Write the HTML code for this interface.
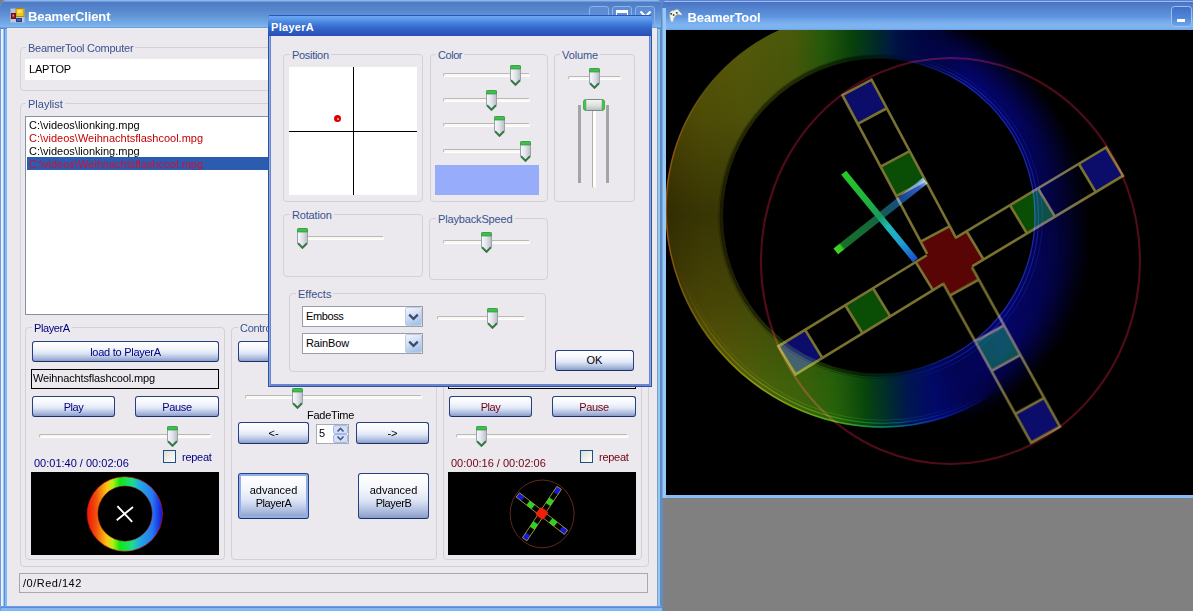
<!DOCTYPE html>
<html>
<head>
<meta charset="utf-8">
<title>BeamerClient</title>
<style>
*{box-sizing:border-box;margin:0;padding:0}
html,body{width:1193px;height:611px;overflow:hidden;background:#808080}
body{position:relative;font-family:"Liberation Sans",sans-serif;font-size:11px;color:#000}
.abs,.abs *{position:absolute}
.abs{left:0;top:0}
.t{white-space:nowrap;line-height:13px;height:13px}
/* group box */
.gb{border:1px solid #d3d0d8;border-radius:4px}
.gl{background:#ebe9ed;color:#38528f;padding:0 2px;white-space:nowrap;line-height:13px;height:13px}
/* buttons */
.btn{border:1px solid #263f80;border-bottom-color:#1c3068;border-radius:3px;background:linear-gradient(#ffffff 0%,#f5f7fc 32%,#dfe6f5 58%,#b6c4e3 80%,#8a9cc8 100%);text-align:center;white-space:nowrap}
.btn span{position:static}
.navy{color:#000080}
.maroon{color:#720010}
/* slider */
.trk{height:4px;border-radius:2px;background:#f8f8f4;border:1px solid #b9b9b2;border-bottom-color:#fff;border-right-color:#fff}
.thumb{width:11px;height:21px}
.cb{width:20px;height:21px;border:1px solid #8cb2ea;border-radius:3px;background:linear-gradient(#5c8ad2,#5f90d8 50%,#6c9fe0)}
.chk{width:13px;height:13px;border:1px solid #1c5180;background:linear-gradient(135deg,#dcdcd7,#fff)}
.foc{box-shadow:inset 0 0 0 2px #8eb0ec}
</style>
</head>
<body>
<div style="position:absolute;left:650px;top:0;width:24px;height:12px;background:#5a84cc"></div>
<!-- ================= Main window: BeamerClient ================= -->
<div class="abs" id="main" style="width:663px;height:611px;">
  <div id="mframe" style="left:0;top:0;width:663px;height:611px;border-radius:7px 7px 0 0;background:#84b8f0"></div>
  <!-- left border -->
  <div style="left:0;top:20px;width:7px;height:591px;background:linear-gradient(to right,#7896d8 0,#7896d8 1.2px,#e6f1ff 1.4px,#e6f1ff 2.9px,#98c8f4 3.1px,#98c8f4 3.9px,#5a8cdc 4.1px,#5a8cdc 4.9px,#84b8f0 5.1px,#84b8f0 6.6px,#cfe3fa 6.8px)"></div>
  <!-- right border -->
  <div style="left:657px;top:20px;width:6px;height:591px;background:linear-gradient(to right,#7da0cd 0,#7da0cd 0.9px,#96c8eb 1.1px,#96c8eb 2.9px,#5f8cc3 3.1px,#5f8cc3 6px)"></div>
  <!-- bottom border -->
  <div style="left:1px;top:606px;width:661px;height:5px;background:linear-gradient(#cfe3fa 0,#5a8cdc 0.6px,#5a8cdc 1.8px,#84b8f0 2.2px)"></div>
  <div id="mtitle" style="left:0;top:0;width:663px;height:29px;border-radius:7px 7px 0 0;background:linear-gradient(#8fb6ee 0px,#8fb6ee 1px,#4f7cc4 2px,#5686cd 10px,#6497d8 17px,#78b0ea 25px,#7db6ee 26.5px,#6a9cdc 27.6px,#5a8ac8 28.3px,#5a8ac8 29px)"></div>
  <div id="mclient" style="left:7px;top:28.3px;width:650px;height:578px;background:#ebe9ed"></div>
  <!-- icon -->
  <svg style="left:10px;top:7px" width="16" height="16" viewBox="0 0 16 16"><rect x="0.5" y="1.5" width="14" height="14" fill="#c9cfdc" opacity="0.85"/><rect x="6" y="1.5" width="8" height="8" fill="#f2c81c" stroke="#b08a10" stroke-width="1"/><rect x="7.5" y="3" width="4" height="3" fill="#fbe57a"/><rect x="1.5" y="6.5" width="4" height="5" fill="#a01818" stroke="#701010" stroke-width="1"/><rect x="2.5" y="7.5" width="1.5" height="2" fill="#e08080"/><rect x="6.5" y="11.5" width="5" height="3" fill="#3a62b0" stroke="#24407c" stroke-width="1"/></svg>
  <!-- caption buttons -->
  <div class="cb" style="left:589px;top:6px"></div>
  <div class="cb" style="left:612px;top:6px"><div style="left:3px;top:3px;width:12px;height:10px;border:1px solid #fff;border-top-width:3px"></div></div>
  <div class="cb" style="left:635px;top:6px"><svg style="left:3px;top:3px" width="13" height="13" viewBox="0 0 13 13"><path d="M1.5,1.5 L11.5,11.5 M11.5,1.5 L1.5,11.5" stroke="#fff" stroke-width="2.2" fill="none"/></svg></div>
  <!-- group: BeamerTool Computer -->
  <div class="gb" style="left:20px;top:47px;width:629px;height:44px"></div>
  <div class="t gl" style="left:26px;top:41.5px;letter-spacing:-0.25px">BeamerTool Computer</div>
  <div style="left:25px;top:59px;width:380px;height:21px;background:#fff"></div>
  <div class="t" style="left:29px;top:63px;letter-spacing:-0.2px">LAPTOP</div>
  <!-- group: Playlist -->
  <div class="gb" style="left:20px;top:103px;width:629px;height:464px"></div>
  <div class="t gl" style="left:26px;top:97.5px">Playlist</div>
  <div style="left:25px;top:116px;width:618px;height:199px;background:#fff;border:1px solid #8791a3"></div>
  <div class="t" style="left:29px;top:119px">C:\videos\lionking.mpg</div>
  <div class="t" style="left:29px;top:132px;color:#c80000">C:\videos\Weihnachtsflashcool.mpg</div>
  <div class="t" style="left:29px;top:145px">C:\videos\lionking.mpg</div>
  <div style="left:27px;top:157px;width:614px;height:13px;background:#2c5cb0"></div>
  <div class="t" style="left:29px;top:158px;color:#d01030">C:\videos\Weihnachtsflashcool.mpg</div>
  <!-- group: PlayerA -->
  <div class="gb" style="left:25px;top:327px;width:200px;height:233px"></div>
  <div class="t gl navy" style="left:32px;top:321.5px;letter-spacing:-0.4px">PlayerA</div>
  <div class="btn navy" style="left:32px;top:341px;width:187px;height:21px;line-height:20.5px;letter-spacing:-0.26px">load to PlayerA</div>
  <div style="left:31px;top:369px;width:188px;height:20px;border:1px solid #000;background:#ebe9ed"></div>
  <div class="t" style="left:33px;top:372px;letter-spacing:-0.14px">Weihnachtsflashcool.mpg</div>
  <div class="btn navy" style="left:32px;top:396px;width:83px;height:21px;line-height:20.5px;letter-spacing:-0.45px">Play</div>
  <div class="btn navy" style="left:135px;top:396px;width:84px;height:21px;line-height:20.5px;letter-spacing:-0.3px">Pause</div>
  <div class="trk" style="left:39px;top:434px;width:172px"></div>
  <svg class="thumb" style="left:167px;top:426px" width="11" height="21" viewBox="0 0 11 21"><defs><linearGradient id="tg1" x1="0" x2="1"><stop offset="0" stop-color="#fafafc"/><stop offset="0.5" stop-color="#e2e2ea"/><stop offset="1" stop-color="#bcbcc6"/></linearGradient></defs><path d="M1.5,0.5 h8 a1,1 0 0 1 1,1 v13.5 l-5,5 l-5,-5 v-13.5 a1,1 0 0 1 1,-1z" fill="url(#tg1)" stroke="#98a2aa" stroke-width="1"/><path d="M1.5,0.5 h8 a1,1 0 0 1 1,1 v2.4 h-10 v-2.4 a1,1 0 0 1 1,-1z" fill="#44bc52" stroke="#34a444" stroke-width="1"/><path d="M1,15.3 l4.5,4.5 l4.5,-4.5" fill="none" stroke="#347a44" stroke-width="2"/></svg>
  <div class="chk" style="left:163px;top:450px"></div>
  <div class="t navy" style="left:182px;top:450.5px;letter-spacing:-0.27px">repeat</div>
  <div class="t navy" style="left:34px;top:456.5px">00:01:40 / 00:02:06</div>
  <div id="prevA" style="left:31px;top:472px;width:188px;height:83px;background:#000;overflow:hidden"><svg style="left:0;top:0" width="188" height="83" viewBox="31 472 188 83"><defs><linearGradient id="pa" gradientUnits="userSpaceOnUse" x1="87" y1="0" x2="162.5" y2="0"><stop offset="0" stop-color="#f0140a"/><stop offset="0.12" stop-color="#f0500a"/><stop offset="0.265" stop-color="#fac814"/><stop offset="0.34" stop-color="#b4f014"/><stop offset="0.435" stop-color="#14e614"/><stop offset="0.6" stop-color="#1edc8c"/><stop offset="0.7" stop-color="#1eaae6"/><stop offset="0.865" stop-color="#2878f0"/><stop offset="1" stop-color="#1414dc"/></linearGradient></defs>
<path fill="url(#pa)" fill-rule="evenodd" d="M87.1,514 a37.7,37.3 0 1 0 75.4,0 a37.7,37.3 0 1 0 -75.4,0z M97.8,513.6 a27.2,27.6 0 1 0 54.4,0 a27.2,27.6 0 1 0 -54.4,0z"/>
<ellipse cx="124.8" cy="514" rx="37.7" ry="37.3" fill="none" stroke="#c81408" stroke-width="0.8" opacity="0.8"/>
<ellipse cx="125" cy="513.6" rx="27.2" ry="27.6" fill="none" stroke="#a01008" stroke-width="0.7" opacity="0.7"/>
<path d="M117.4,506.2 L132.2,521.8 M133,507 L116.7,520.2" stroke="#fff" stroke-width="1.9" fill="none"/></svg></div>
  <!-- group: Control -->
  <div class="gb" style="left:231px;top:327px;width:206px;height:233px"></div>
  <div class="t gl" style="left:238px;top:321.5px;letter-spacing:-0.3px">Control</div>
  <div class="btn" style="left:238px;top:341px;width:192px;height:21px;line-height:20.5px"></div>
  <div class="trk" style="left:245px;top:395px;width:177px"></div>
  <svg class="thumb" style="left:292px;top:388px" width="11" height="21" viewBox="0 0 11 21"><defs><linearGradient id="tg2" x1="0" x2="1"><stop offset="0" stop-color="#fafafc"/><stop offset="0.5" stop-color="#e2e2ea"/><stop offset="1" stop-color="#bcbcc6"/></linearGradient></defs><path d="M1.5,0.5 h8 a1,1 0 0 1 1,1 v13.5 l-5,5 l-5,-5 v-13.5 a1,1 0 0 1 1,-1z" fill="url(#tg2)" stroke="#98a2aa" stroke-width="1"/><path d="M1.5,0.5 h8 a1,1 0 0 1 1,1 v2.4 h-10 v-2.4 a1,1 0 0 1 1,-1z" fill="#44bc52" stroke="#34a444" stroke-width="1"/><path d="M1,15.3 l4.5,4.5 l4.5,-4.5" fill="none" stroke="#347a44" stroke-width="2"/></svg>
  <div class="t" style="left:307px;top:408.5px;letter-spacing:-0.25px">FadeTime</div>
  <div class="btn" style="left:238px;top:422px;width:71px;height:22px;line-height:20px">&lt;-</div>
  <div id="nud" style="left:316px;top:424px;width:33px;height:20px;background:#fff;border:1px solid #a5acb2"></div>
  <svg style="left:333px;top:425px" width="15" height="18" viewBox="0 0 15 18"><rect x="0.5" y="0.5" width="14" height="8" rx="1.5" fill="#d4defa" stroke="#a8b8e4"/><rect x="0.5" y="9.5" width="14" height="8" rx="1.5" fill="#d4defa" stroke="#a8b8e4"/><path d="M4.5,6.5 l3,-3 l3,3" fill="none" stroke="#44587c" stroke-width="1.6"/><path d="M4.5,11.5 l3,3 l3,-3" fill="none" stroke="#44587c" stroke-width="1.6"/></svg>
  <div class="t" style="left:319px;top:427px">5</div>
  <div class="btn" style="left:356px;top:422px;width:73px;height:22px;line-height:20px">-&gt;</div>
  <div class="btn foc" style="left:238px;top:473px;width:71px;height:46px;line-height:13px;padding-top:10px">advanced<br><span style="letter-spacing:-0.4px">PlayerA</span></div>
  <div class="btn" style="left:358px;top:473px;width:71px;height:46px;line-height:13px;padding-top:10px">advanced<br><span style="letter-spacing:-0.4px">PlayerB</span></div>
  <!-- group: PlayerB -->
  <div class="gb" style="left:443px;top:327px;width:199px;height:233px"></div>
    <div class="btn maroon" style="left:449px;top:341px;width:187px;height:21px;line-height:20.5px;letter-spacing:-0.26px"></div>
  <div style="left:448px;top:369px;width:188px;height:20px;border:1px solid #000;background:#ebe9ed"></div>
    <div class="btn maroon" style="left:449px;top:396px;width:83px;height:21px;line-height:20.5px;letter-spacing:-0.45px">Play</div>
  <div class="btn maroon" style="left:552px;top:396px;width:84px;height:21px;line-height:20.5px;letter-spacing:-0.3px">Pause</div>
  <div class="trk" style="left:456px;top:434px;width:172px"></div>
  <svg class="thumb" style="left:476px;top:426px" width="11" height="21" viewBox="0 0 11 21"><defs><linearGradient id="tg3" x1="0" x2="1"><stop offset="0" stop-color="#fafafc"/><stop offset="0.5" stop-color="#e2e2ea"/><stop offset="1" stop-color="#bcbcc6"/></linearGradient></defs><path d="M1.5,0.5 h8 a1,1 0 0 1 1,1 v13.5 l-5,5 l-5,-5 v-13.5 a1,1 0 0 1 1,-1z" fill="url(#tg3)" stroke="#98a2aa" stroke-width="1"/><path d="M1.5,0.5 h8 a1,1 0 0 1 1,1 v2.4 h-10 v-2.4 a1,1 0 0 1 1,-1z" fill="#44bc52" stroke="#34a444" stroke-width="1"/><path d="M1,15.3 l4.5,4.5 l4.5,-4.5" fill="none" stroke="#347a44" stroke-width="2"/></svg>
  <div class="chk" style="left:580px;top:450px"></div>
  <div class="t maroon" style="left:599px;top:450.5px;letter-spacing:-0.27px">repeat</div>
  <div class="t maroon" style="left:451px;top:456.5px">00:00:16 / 00:02:06</div>
  <div id="prevB" style="left:448px;top:472px;width:188px;height:83px;background:#000;overflow:hidden"><svg style="left:0;top:0" width="188" height="83" viewBox="448 472 188 83"><ellipse cx="542.1" cy="513.9" rx="32" ry="33.9" fill="none" stroke="#6a2c24" stroke-width="0.9"/><g transform="translate(541.9,513.6) rotate(37.8)"><rect x="11" y="-2.7" width="6.5" height="5.4" fill="#28d228"/><rect x="24.0" y="-2.7" width="6.5" height="5.4" fill="#1818dc"/><path d="M3,-2.7 H30.5 V2.7 H3" fill="none" stroke="#bebe30" stroke-width="0.7"/></g><g transform="translate(541.9,513.6) rotate(217.8)"><rect x="11" y="-2.7" width="6.5" height="5.4" fill="#28d228"/><rect x="24.0" y="-2.7" width="6.5" height="5.4" fill="#1818dc"/><path d="M3,-2.7 H30.5 V2.7 H3" fill="none" stroke="#bebe30" stroke-width="0.7"/></g><g transform="translate(541.9,513.6) rotate(-56.2)"><rect x="11" y="-2.7" width="6.5" height="5.4" fill="#28d228"/><rect x="24.5" y="-2.7" width="6.5" height="5.4" fill="#1818dc"/><path d="M3,-2.7 H31 V2.7 H3" fill="none" stroke="#bebe30" stroke-width="0.7"/></g><g transform="translate(541.9,513.6) rotate(123.8)"><rect x="11" y="-2.7" width="6.5" height="5.4" fill="#28d228"/><rect x="24.5" y="-2.7" width="6.5" height="5.4" fill="#1818dc"/><path d="M3,-2.7 H31 V2.7 H3" fill="none" stroke="#bebe30" stroke-width="0.7"/></g><rect x="-4.8" y="-4.8" width="9.6" height="9.6" rx="2" fill="#f01e0f" transform="translate(541.9,513.4) rotate(36)"/></svg></div>
  <!-- status -->
  <div style="left:19px;top:573px;width:629px;height:20px;border:1px solid #a8a8ac;background:#ebe9ed"></div>
  <div class="t" style="left:23px;top:577px;letter-spacing:0.5px">/0/Red/142</div>
  <div class="t" id="mtext" style="left:28px;top:9.1px;letter-spacing:-0.12px;font-size:13px;font-weight:bold;color:#fff;line-height:16px;height:16px">BeamerClient</div>
</div>

<!-- ================= Right window: BeamerTool ================= -->
<div class="abs" id="tool" style="left:661px;top:0;width:532px;height:498px;">
  <div style="left:0;top:0;width:532px;height:498px;border-radius:8px 0 0 0;background:#88bcf2"></div>
  <div style="left:0;top:0;width:532px;height:30px;border-radius:8px 0 0 0;background:linear-gradient(#5a82d2 0px,#5a82d2 0.9px,#96bef5 1.1px,#96bef5 1.7px,#4b73c3 2.2px,#5686d0 10px,#5f96e1 17px,#74aaea 21px,#7db4f0 25px,#7db4f0 28px,#6ea2e6 30px)"></div>
  <div style="left:0;top:8px;width:5px;height:490px;background:linear-gradient(to right,#5f8cc3 0,#5f8cc3 1.4px,#96c8fa 1.6px,#96c8fa 5px)"></div>
  <svg style="left:7px;top:8px" width="15" height="15" viewBox="0 0 15 15"><path d="M2.2,4.2 C3.5,1.8 6,3 7.2,2 C8.6,0.6 10.6,1.2 11.2,3.2 L13.8,5.8 C14.4,6.6 13.6,7.4 12.6,7 L9.6,6.4 C7.4,7.2 6.6,9 5.6,11.4 C5.2,12.6 5.8,13.8 4.4,14 C2.8,14.2 2.4,12.6 2.2,11 C1.8,8.6 1,6.6 2.2,4.2z" fill="#f1f1e4" stroke="#9aa6b4" stroke-width="0.6"/><circle cx="3.2" cy="5.8" r="0.9" fill="#222"/><circle cx="5.6" cy="7" r="0.9" fill="#3a4a2a"/><circle cx="8.8" cy="4.8" r="0.9" fill="#222"/></svg>
  <div class="t" style="left:26.5px;top:9.7px;letter-spacing:-0.12px;font-size:13px;font-weight:bold;color:#fff;line-height:16px;height:16px">BeamerTool</div>
  <div style="left:510px;top:6px;width:21px;height:21px;border:1px solid #9cc0f0;border-radius:3.5px;background:linear-gradient(#3f70c8,#4f86d8 55%,#6ea6e8)"><div style="left:5px;top:12px;width:8px;height:3px;background:#fff"></div></div>
  <div id="canvas" style="left:5px;top:30px;width:527px;height:465px;background:#000;overflow:hidden"><svg style="left:0;top:0" width="527" height="465" viewBox="666 30 527 465">
<defs>
<linearGradient id="rg" gradientUnits="userSpaceOnUse" x1="666" y1="45" x2="1079.6" y2="32.2">
<stop offset="0" stop-color="#625606"/>
<stop offset="0.02" stop-color="#645c06"/>
<stop offset="0.08" stop-color="#6a6608"/>
<stop offset="0.179" stop-color="#686c0c"/>
<stop offset="0.31" stop-color="#586c0c"/>
<stop offset="0.382" stop-color="#2c6c0c"/>
<stop offset="0.45" stop-color="#0a500c"/>
<stop offset="0.51" stop-color="#003232"/>
<stop offset="0.558" stop-color="#00195a"/>
<stop offset="0.62" stop-color="#020a74"/>
<stop offset="0.74" stop-color="#060694"/>
<stop offset="1" stop-color="#06068c"/>
</linearGradient>
<linearGradient id="vd" gradientUnits="userSpaceOnUse" x1="0" y1="30" x2="0" y2="430">
<stop offset="0" stop-color="#000" stop-opacity="0.17"/>
<stop offset="0.22" stop-color="#000" stop-opacity="0.26"/>
<stop offset="0.46" stop-color="#000" stop-opacity="0.48"/>
<stop offset="0.68" stop-color="#000" stop-opacity="0.33"/>
<stop offset="0.88" stop-color="#000" stop-opacity="0.13"/>
<stop offset="1" stop-color="#000" stop-opacity="0.1"/>
</linearGradient>
<linearGradient id="rg2" gradientUnits="userSpaceOnUse" x1="666" y1="45" x2="1079.6" y2="32.2">
<stop offset="0" stop-color="#8a5a00"/>
<stop offset="0.2" stop-color="#7a7a10"/>
<stop offset="0.39" stop-color="#2a8a10"/>
<stop offset="0.53" stop-color="#006a6a"/>
<stop offset="0.65" stop-color="#1030c0"/>
<stop offset="1" stop-color="#1020c0"/>
</linearGradient>
<linearGradient id="gL" gradientUnits="userSpaceOnUse" x1="860" y1="0" x2="930" y2="0"><stop offset="0" stop-color="#fff"/><stop offset="1" stop-color="#000"/></linearGradient>
<linearGradient id="gR" gradientUnits="userSpaceOnUse" x1="900" y1="0" x2="960" y2="0"><stop offset="0" stop-color="#000"/><stop offset="1" stop-color="#fff"/></linearGradient>
<linearGradient id="gB" gradientUnits="userSpaceOnUse" x1="0" y1="270" x2="0" y2="400"><stop offset="0" stop-color="#000"/><stop offset="1" stop-color="#fff"/></linearGradient>
<linearGradient id="gBx" gradientUnits="userSpaceOnUse" x1="900" y1="0" x2="990" y2="0"><stop offset="0" stop-color="#000" stop-opacity="0"/><stop offset="1" stop-color="#000" stop-opacity="1"/></linearGradient>
<mask id="mLeft" maskUnits="userSpaceOnUse" x="640" y="0" width="560" height="500"><rect x="640" y="0" width="560" height="500" fill="url(#gL)"/></mask>
<mask id="mRight" maskUnits="userSpaceOnUse" x="640" y="0" width="560" height="500"><rect x="640" y="0" width="560" height="500" fill="url(#gR)"/></mask>
<mask id="mBot" maskUnits="userSpaceOnUse" x="640" y="0" width="560" height="500"><rect x="640" y="0" width="560" height="500" fill="url(#gB)"/><rect x="640" y="0" width="560" height="500" fill="url(#gBx)"/></mask>
<linearGradient id="og" gradientUnits="userSpaceOnUse" x1="666" y1="0" x2="720" y2="0"><stop offset="0" stop-color="#a05810" stop-opacity="0.9"/><stop offset="0.5" stop-color="#8a6a10" stop-opacity="0.5"/><stop offset="1" stop-color="#6a6a10" stop-opacity="0"/></linearGradient>
<clipPath id="rclip"><path clip-rule="evenodd" d="M1023.643,87.739 A201.5,212.3 -41.1 0 1 1011.361,380.182 A201.5,212.3 -41.1 0 1 719.957,352.661 A201.5,212.3 -41.1 0 1 732.239,60.218 A201.5,212.3 -41.1 0 1 1023.643,87.739z M1035.000,216.000 A156.0,157.5 0.0 0 1 879.000,373.500 A156.0,157.5 0.0 0 1 723.000,216.000 A156.0,157.5 0.0 0 1 879.000,58.500 A156.0,157.5 0.0 0 1 1035.000,216.000z"/></clipPath>
<linearGradient id="gx" gradientUnits="userSpaceOnUse" x1="715" y1="0" x2="870" y2="0"><stop offset="0" stop-color="#466e0c" stop-opacity="0"/><stop offset="0.4" stop-color="#40700c" stop-opacity="0.6"/><stop offset="0.75" stop-color="#2c700c" stop-opacity="0.55"/><stop offset="1" stop-color="#145a0a" stop-opacity="0"/></linearGradient>
<linearGradient id="gyg" gradientUnits="userSpaceOnUse" x1="0" y1="270" x2="0" y2="370"><stop offset="0" stop-color="#000"/><stop offset="1" stop-color="#fff"/></linearGradient>
<mask id="gy" maskUnits="userSpaceOnUse" x="640" y="0" width="560" height="500"><rect x="640" y="0" width="560" height="500" fill="url(#gyg)"/></mask>
<radialGradient id="dk"><stop offset="0" stop-color="#000" stop-opacity="0.55"/><stop offset="0.5" stop-color="#000" stop-opacity="0.4"/><stop offset="1" stop-color="#000" stop-opacity="0"/></radialGradient>
<radialGradient id="fade" gradientUnits="userSpaceOnUse" cx="0" cy="0" r="1" gradientTransform="translate(873.5 220.2) rotate(-41.1) scale(214 225)">
<stop offset="0" stop-color="#fff"/>
<stop offset="0.72" stop-color="#fff"/>
<stop offset="0.82" stop-color="#dcdcdc"/>
<stop offset="0.89" stop-color="#8c8c8c"/>
<stop offset="0.95" stop-color="#363636"/>
<stop offset="1" stop-color="#000"/>
</radialGradient>
<linearGradient id="fx" gradientUnits="userSpaceOnUse" x1="890" y1="30" x2="959.4" y2="21.3">
<stop offset="0" stop-color="#000" stop-opacity="0"/><stop offset="1" stop-color="#000" stop-opacity="1"/>
</linearGradient>
<linearGradient id="fx2" gradientUnits="userSpaceOnUse" x1="890" y1="30" x2="959.4" y2="21.3">
<stop offset="0" stop-color="#000" stop-opacity="1"/><stop offset="1" stop-color="#000" stop-opacity="0"/>
</linearGradient>
<mask id="mk" maskUnits="userSpaceOnUse" x="640" y="0" width="560" height="500">
<rect x="640" y="0" width="560" height="500" fill="#fff"/>
<rect x="640" y="0" width="560" height="500" fill="url(#fx)"/>
</mask>
<mask id="mk2" maskUnits="userSpaceOnUse" x="640" y="0" width="560" height="500">
<rect x="640" y="0" width="560" height="500" fill="url(#fade)"/>
<rect x="640" y="0" width="560" height="500" fill="url(#fx2)"/>
</mask>
</defs>
<rect x="666" y="30" width="527" height="465" fill="#000"/>
<!-- rainbow ring: left/sharp part and right/soft part -->
<g mask="url(#mk)"><path fill="url(#rg)" fill-rule="evenodd" d="M1023.643,87.739 A201.5,212.3 -41.1 0 1 1011.361,380.182 A201.5,212.3 -41.1 0 1 719.957,352.661 A201.5,212.3 -41.1 0 1 732.239,60.218 A201.5,212.3 -41.1 0 1 1023.643,87.739z M1035.000,216.000 A156.0,157.5 0.0 0 1 879.000,373.500 A156.0,157.5 0.0 0 1 723.000,216.000 A156.0,157.5 0.0 0 1 879.000,58.500 A156.0,157.5 0.0 0 1 1035.000,216.000z"/></g>
<g mask="url(#mk2)"><path fill="url(#rg)" fill-rule="evenodd" d="M1034.763,79.522 A214.0,225.0 -41.1 0 1 1021.409,389.752 A214.0,225.0 -41.1 0 1 712.237,360.878 A214.0,225.0 -41.1 0 1 725.591,50.648 A214.0,225.0 -41.1 0 1 1034.763,79.522z M1035.000,216.000 A156.0,157.5 0.0 0 1 879.000,373.500 A156.0,157.5 0.0 0 1 723.000,216.000 A156.0,157.5 0.0 0 1 879.000,58.500 A156.0,157.5 0.0 0 1 1035.000,216.000z"/></g>
<g clip-path="url(#rclip)"><rect x="666" y="30" width="527" height="465" fill="url(#gx)" mask="url(#gy)"/></g>
<rect x="666" y="30" width="527" height="465" fill="url(#vd)"/>
<g fill="none">
<g mask="url(#mLeft)"><path d="M1036.500,216.000 A157.5,159.0 0.0 0 1 879.000,375.000 A157.5,159.0 0.0 0 1 721.500,216.000 A157.5,159.0 0.0 0 1 879.000,57.000 A157.5,159.0 0.0 0 1 1036.500,216.000z" stroke="#000" stroke-opacity="0.5" stroke-width="4"/>
<path d="M1039.500,216.500 A160.5,162.0 0.0 0 1 879.000,378.500 A160.5,162.0 0.0 0 1 718.500,216.500 A160.5,162.0 0.0 0 1 879.000,54.500 A160.5,162.0 0.0 0 1 1039.500,216.500z" stroke="#000" stroke-opacity="0.25" stroke-width="1"/></g>
</g>
<g fill="none" style="mix-blend-mode:screen">
<g mask="url(#mRight)"><path d="M1035.000,216.000 A156.0,157.5 0.0 0 1 879.000,373.500 A156.0,157.5 0.0 0 1 723.000,216.000 A156.0,157.5 0.0 0 1 879.000,58.500 A156.0,157.5 0.0 0 1 1035.000,216.000z" stroke="#2038d0" stroke-width="1.3" opacity="0.7"/>
<path d="M1038.500,217.000 A159.5,161.0 0.0 0 1 879.000,378.000 A159.5,161.0 0.0 0 1 719.500,217.000 A159.5,161.0 0.0 0 1 879.000,56.000 A159.5,161.0 0.0 0 1 1038.500,217.000z" stroke="#1830c0" stroke-width="1.1" opacity="0.55"/>
<path d="M1042.500,217.500 A163.5,164.5 0.0 0 1 879.000,382.000 A163.5,164.5 0.0 0 1 715.500,217.500 A163.5,164.5 0.0 0 1 879.000,53.000 A163.5,164.5 0.0 0 1 1042.500,217.500z" stroke="#1428b0" stroke-width="1" opacity="0.35"/></g>
<g mask="url(#mBot)"><path d="M1022.889,88.396 A200.5,211.3 -41.1 0 1 1010.703,379.428 A200.5,211.3 -41.1 0 1 720.711,352.004 A200.5,211.3 -41.1 0 1 732.897,60.972 A200.5,211.3 -41.1 0 1 1022.889,88.396z" stroke="url(#rg2)" stroke-width="1.5" opacity="0.85"/>
<path d="M1021.329,89.668 A197.5,208.3 -41.1 0 1 1009.431,376.467 A197.5,208.3 -41.1 0 1 723.671,349.332 A197.5,208.3 -41.1 0 1 735.569,62.533 A197.5,208.3 -41.1 0 1 1021.329,89.668z" stroke="url(#rg2)" stroke-width="1.2" opacity="0.6"/>
<path d="M1019.068,91.641 A194.5,205.3 -41.1 0 1 1007.459,374.207 A194.5,205.3 -41.1 0 1 725.932,347.359 A194.5,205.3 -41.1 0 1 737.541,64.793 A194.5,205.3 -41.1 0 1 1019.068,91.641z" stroke="url(#rg2)" stroke-width="1" opacity="0.3"/></g>
</g>
<path d="M1023.266,88.068 A201.0,211.8 -41.1 0 1 1011.032,379.805 A201.0,211.8 -41.1 0 1 720.334,352.332 A201.0,211.8 -41.1 0 1 732.568,60.595 A201.0,211.8 -41.1 0 1 1023.266,88.068z" fill="none" stroke="url(#og)" stroke-width="1.5"/>
<ellipse cx="950.5" cy="261" rx="189.5" ry="203" fill="none" stroke="#4e0c18" stroke-width="2.2" style="mix-blend-mode:screen"/>
<g style="mix-blend-mode:screen"><rect x="-17" y="-17" width="34" height="34" fill="#5a0505" transform="translate(949.5,260.7) rotate(-30)"/><g transform="translate(949.5,260.7) rotate(-31.0)"><rect x="0.0" y="-16.5" width="29.8" height="33.0" fill="#5a0505"/><rect x="80.4" y="-16.5" width="32.7" height="33.0" fill="#0a4e06"/><rect x="160.7" y="-16.5" width="31.8" height="33.0" fill="#0c0c6a"/><g fill="none" stroke="#7a7230" stroke-width="2.6" stroke-linejoin="miter"><path d="M16.5,-16.5 H192.5 V16.5 H16.5"/><path d="M29.8,-16.5 V16.5"/><path d="M80.4,-16.5 V16.5"/><path d="M113.1,-16.5 V16.5"/><path d="M160.7,-16.5 V16.5"/></g></g><g transform="translate(949.5,260.7) rotate(148.5)"><rect x="0.0" y="-16.5" width="29.5" height="33.0" fill="#5a0505"/><rect x="79.6" y="-16.5" width="32.4" height="33.0" fill="#0a4e06"/><rect x="159.2" y="-16.5" width="31.5" height="33.0" fill="#0c0c6a"/><g fill="none" stroke="#7a7230" stroke-width="2.6" stroke-linejoin="miter"><path d="M16.5,-16.5 H190.7 V16.5 H16.5"/><path d="M29.5,-16.5 V16.5"/><path d="M79.6,-16.5 V16.5"/><path d="M112.1,-16.5 V16.5"/><path d="M159.2,-16.5 V16.5"/></g></g><g transform="translate(949.5,260.7) rotate(-118.1)"><rect x="0.0" y="-16.5" width="30.4" height="33.0" fill="#5a0505"/><rect x="82.0" y="-16.5" width="33.4" height="33.0" fill="#0a4e06"/><rect x="164.0" y="-16.5" width="32.4" height="33.0" fill="#0c0c6a"/><g fill="none" stroke="#7a7230" stroke-width="2.6" stroke-linejoin="miter"><path d="M16.5,-16.5 H196.4 V16.5 H16.5"/><path d="M30.4,-16.5 V16.5"/><path d="M82.0,-16.5 V16.5"/><path d="M115.4,-16.5 V16.5"/><path d="M164.0,-16.5 V16.5"/></g></g><g transform="translate(949.5,260.7) rotate(61.1)"><rect x="0.0" y="-16.5" width="30.7" height="33.0" fill="#5a0505"/><rect x="83.0" y="-16.5" width="33.8" height="33.0" fill="#0a4e06"/><rect x="165.9" y="-16.5" width="32.8" height="33.0" fill="#0c0c6a"/><g fill="none" stroke="#7a7230" stroke-width="2.6" stroke-linejoin="miter"><path d="M16.5,-16.5 H198.7 V16.5 H16.5"/><path d="M30.7,-16.5 V16.5"/><path d="M83.0,-16.5 V16.5"/><path d="M116.8,-16.5 V16.5"/><path d="M165.9,-16.5 V16.5"/></g></g></g>
<!-- small green cross -->
<defs>
<linearGradient id="sa" gradientUnits="userSpaceOnUse" x1="843.7" y1="172.8" x2="915.4" y2="260.2">
<stop offset="0" stop-color="#28c828"/><stop offset="0.35" stop-color="#1eb040"/><stop offset="0.5" stop-color="#189860"/><stop offset="0.62" stop-color="#20b8b8"/><stop offset="0.8" stop-color="#20a0d0"/><stop offset="1" stop-color="#1850c8"/>
</linearGradient>
<linearGradient id="sb" gradientUnits="userSpaceOnUse" x1="835.8" y1="251.4" x2="925.2" y2="180.6">
<stop offset="0" stop-color="#40d820"/><stop offset="0.06" stop-color="#38c820"/><stop offset="0.08" stop-color="#187028"/><stop offset="0.4" stop-color="#146838"/><stop offset="0.55" stop-color="#145858"/><stop offset="0.75" stop-color="#184890"/><stop offset="0.92" stop-color="#3060c0"/><stop offset="1" stop-color="#88b0e0"/>
</linearGradient>
</defs>
<g style="mix-blend-mode:screen">
<line x1="835.8" y1="251.4" x2="925.2" y2="180.6" stroke="url(#sb)" stroke-width="7.5"/>
<line x1="843.7" y1="172.8" x2="915.4" y2="260.2" stroke="url(#sa)" stroke-width="6.5"/>
</g>
</svg></div>
</div>

<!-- ================= Dialog: PlayerA ================= -->
<div class="abs" id="dlg" style="left:268px;top:15px;width:384px;height:372px;">
  <div style="left:0;top:0;width:384px;height:372px;background:#30509c;border-radius:3px 3px 0 0"></div>
  <div style="left:1px;top:1px;width:382px;height:370px;background:#84a8ea;border-radius:2px 2px 0 0"></div>
  <div style="left:2px;top:2px;width:380px;height:369px;background:#6a84d0"></div>
  <div style="left:0;top:0;width:384px;height:21px;border-radius:3px 3px 0 0;background:linear-gradient(#2448ac 0,#2a58bc 0.7px,#6aa4f0 1.2px,#64a0ee 3px,#4c88e0 7px,#3a70d2 11px,#2f60c4 15px,#2c55ba 19px,#2a4cb0 21px)"></div>
  <div style="left:3px;top:20.6px;width:378px;height:348.2px;background:#ebe9ed"></div>
  <div class="t" style="left:3px;top:5.2px;font-size:11px;font-weight:bold;color:#fff;line-height:14px;height:14px;letter-spacing:0.3px">PlayerA</div>
</div>
<div class="abs" id="dlgc">
  <!-- Position -->
  <div class="gb" style="left:283px;top:54px;width:140px;height:148px"></div>
  <div class="t gl" style="left:290px;top:49px;letter-spacing:-0.3px">Position</div>
  <div style="left:289px;top:67px;width:128px;height:128px;background:#fff"></div>
  <div style="left:353px;top:67px;width:1px;height:128px;background:#000"></div>
  <div style="left:289px;top:131px;width:128px;height:1px;background:#000"></div>
  <div style="left:334px;top:115px;width:7px;height:7px;border-radius:50%;background:#d80000"></div>
  <div style="left:336.5px;top:117.5px;width:2px;height:2px;border-radius:50%;background:#ffb0b0"></div>
  <!-- Color -->
  <div class="gb" style="left:430px;top:54px;width:118px;height:148px"></div>
  <div class="t gl" style="left:436px;top:49px;letter-spacing:-0.45px">Color</div>
  <div class="trk" style="left:443px;top:72.7px;width:87px"></div><svg class="thumb" style="left:510px;top:65px" width="11" height="21" viewBox="0 0 11 21"><defs><linearGradient id="tg11" x1="0" x2="1"><stop offset="0" stop-color="#fafafc"/><stop offset="0.5" stop-color="#e2e2ea"/><stop offset="1" stop-color="#bcbcc6"/></linearGradient></defs><path d="M1.5,0.5 h8 a1,1 0 0 1 1,1 v13.5 l-5,5 l-5,-5 v-13.5 a1,1 0 0 1 1,-1z" fill="url(#tg11)" stroke="#98a2aa" stroke-width="1"/><path d="M1.5,0.5 h8 a1,1 0 0 1 1,1 v2.4 h-10 v-2.4 a1,1 0 0 1 1,-1z" fill="#44bc52" stroke="#34a444" stroke-width="1"/><path d="M1,15.3 l4.5,4.5 l4.5,-4.5" fill="none" stroke="#347a44" stroke-width="2"/></svg>
  <div class="trk" style="left:443px;top:97.7px;width:87px"></div><svg class="thumb" style="left:486px;top:90px" width="11" height="21" viewBox="0 0 11 21"><defs><linearGradient id="tg12" x1="0" x2="1"><stop offset="0" stop-color="#fafafc"/><stop offset="0.5" stop-color="#e2e2ea"/><stop offset="1" stop-color="#bcbcc6"/></linearGradient></defs><path d="M1.5,0.5 h8 a1,1 0 0 1 1,1 v13.5 l-5,5 l-5,-5 v-13.5 a1,1 0 0 1 1,-1z" fill="url(#tg12)" stroke="#98a2aa" stroke-width="1"/><path d="M1.5,0.5 h8 a1,1 0 0 1 1,1 v2.4 h-10 v-2.4 a1,1 0 0 1 1,-1z" fill="#44bc52" stroke="#34a444" stroke-width="1"/><path d="M1,15.3 l4.5,4.5 l4.5,-4.5" fill="none" stroke="#347a44" stroke-width="2"/></svg>
  <div class="trk" style="left:443px;top:122.7px;width:87px"></div><svg class="thumb" style="left:494px;top:116px" width="11" height="21" viewBox="0 0 11 21"><defs><linearGradient id="tg13" x1="0" x2="1"><stop offset="0" stop-color="#fafafc"/><stop offset="0.5" stop-color="#e2e2ea"/><stop offset="1" stop-color="#bcbcc6"/></linearGradient></defs><path d="M1.5,0.5 h8 a1,1 0 0 1 1,1 v13.5 l-5,5 l-5,-5 v-13.5 a1,1 0 0 1 1,-1z" fill="url(#tg13)" stroke="#98a2aa" stroke-width="1"/><path d="M1.5,0.5 h8 a1,1 0 0 1 1,1 v2.4 h-10 v-2.4 a1,1 0 0 1 1,-1z" fill="#44bc52" stroke="#34a444" stroke-width="1"/><path d="M1,15.3 l4.5,4.5 l4.5,-4.5" fill="none" stroke="#347a44" stroke-width="2"/></svg>
  <div class="trk" style="left:443px;top:148.7px;width:87px"></div><svg class="thumb" style="left:520px;top:141px" width="11" height="21" viewBox="0 0 11 21"><defs><linearGradient id="tg14" x1="0" x2="1"><stop offset="0" stop-color="#fafafc"/><stop offset="0.5" stop-color="#e2e2ea"/><stop offset="1" stop-color="#bcbcc6"/></linearGradient></defs><path d="M1.5,0.5 h8 a1,1 0 0 1 1,1 v13.5 l-5,5 l-5,-5 v-13.5 a1,1 0 0 1 1,-1z" fill="url(#tg14)" stroke="#98a2aa" stroke-width="1"/><path d="M1.5,0.5 h8 a1,1 0 0 1 1,1 v2.4 h-10 v-2.4 a1,1 0 0 1 1,-1z" fill="#44bc52" stroke="#34a444" stroke-width="1"/><path d="M1,15.3 l4.5,4.5 l4.5,-4.5" fill="none" stroke="#347a44" stroke-width="2"/></svg>
  <div style="left:435px;top:165px;width:104px;height:30px;background:#98acfc"></div>
  <!-- Volume -->
  <div class="gb" style="left:554px;top:54px;width:81px;height:148px"></div>
  <div class="t gl" style="left:560px;top:49px;letter-spacing:-0.1px">Volume</div>
  <div class="trk" style="left:568px;top:76px;width:53px"></div><svg class="thumb" style="left:589px;top:68px" width="11" height="21" viewBox="0 0 11 21"><defs><linearGradient id="tg15" x1="0" x2="1"><stop offset="0" stop-color="#fafafc"/><stop offset="0.5" stop-color="#e2e2ea"/><stop offset="1" stop-color="#bcbcc6"/></linearGradient></defs><path d="M1.5,0.5 h8 a1,1 0 0 1 1,1 v13.5 l-5,5 l-5,-5 v-13.5 a1,1 0 0 1 1,-1z" fill="url(#tg15)" stroke="#98a2aa" stroke-width="1"/><path d="M1.5,0.5 h8 a1,1 0 0 1 1,1 v2.4 h-10 v-2.4 a1,1 0 0 1 1,-1z" fill="#44bc52" stroke="#34a444" stroke-width="1"/><path d="M1,15.3 l4.5,4.5 l4.5,-4.5" fill="none" stroke="#347a44" stroke-width="2"/></svg>
  <div style="left:578px;top:105px;width:3px;height:78px;background:#a4a4a4"></div>
  <div style="left:606px;top:105px;width:3px;height:78px;background:#a4a4a4"></div>
  <div style="left:592px;top:105px;width:4px;height:83px;background:#fdfdfb;border-left:1px solid #b0b0a8;border-radius:0 0 2px 2px"></div>
  <svg style="left:583px;top:99px" width="22" height="12" viewBox="0 0 22 12"><defs><linearGradient id="vg" x1="0" x2="0" y1="0" y2="1"><stop offset="0" stop-color="#f6f6f2"/><stop offset="0.6" stop-color="#dcdcd8"/><stop offset="1" stop-color="#b8b8b4"/></linearGradient></defs><rect x="0.5" y="0.5" width="21" height="11" rx="3" fill="url(#vg)" stroke="#778892"/><path d="M2.8,0.6 a2.6,2.6 0 0 0 -2.3,2.9 v5 a2.6,2.6 0 0 0 2.3,2.9z" fill="#42c452" stroke="#36b046" stroke-width="0.8"/><path d="M19.2,0.6 a2.6,2.6 0 0 1 2.3,2.9 v5 a2.6,2.6 0 0 1 -2.3,2.9z" fill="#42c452" stroke="#36b046" stroke-width="0.8"/></svg>
  <!-- Rotation -->
  <div class="gb" style="left:283px;top:214px;width:140px;height:63px"></div>
  <div class="t gl" style="left:290px;top:209px;letter-spacing:-0.17px">Rotation</div>
  <div class="trk" style="left:301px;top:235.7px;width:83px"></div><svg class="thumb" style="left:297px;top:228px" width="11" height="21" viewBox="0 0 11 21"><defs><linearGradient id="tg16" x1="0" x2="1"><stop offset="0" stop-color="#fafafc"/><stop offset="0.5" stop-color="#e2e2ea"/><stop offset="1" stop-color="#bcbcc6"/></linearGradient></defs><path d="M1.5,0.5 h8 a1,1 0 0 1 1,1 v13.5 l-5,5 l-5,-5 v-13.5 a1,1 0 0 1 1,-1z" fill="url(#tg16)" stroke="#98a2aa" stroke-width="1"/><path d="M1.5,0.5 h8 a1,1 0 0 1 1,1 v2.4 h-10 v-2.4 a1,1 0 0 1 1,-1z" fill="#44bc52" stroke="#34a444" stroke-width="1"/><path d="M1,15.3 l4.5,4.5 l4.5,-4.5" fill="none" stroke="#347a44" stroke-width="2"/></svg>
  <!-- PlaybackSpeed -->
  <div class="gb" style="left:429px;top:218px;width:119px;height:62px"></div>
  <div class="t gl" style="left:436px;top:213px;letter-spacing:-0.15px">PlaybackSpeed</div>
  <div class="trk" style="left:443px;top:239.7px;width:87px"></div><svg class="thumb" style="left:481px;top:232px" width="11" height="21" viewBox="0 0 11 21"><defs><linearGradient id="tg17" x1="0" x2="1"><stop offset="0" stop-color="#fafafc"/><stop offset="0.5" stop-color="#e2e2ea"/><stop offset="1" stop-color="#bcbcc6"/></linearGradient></defs><path d="M1.5,0.5 h8 a1,1 0 0 1 1,1 v13.5 l-5,5 l-5,-5 v-13.5 a1,1 0 0 1 1,-1z" fill="url(#tg17)" stroke="#98a2aa" stroke-width="1"/><path d="M1.5,0.5 h8 a1,1 0 0 1 1,1 v2.4 h-10 v-2.4 a1,1 0 0 1 1,-1z" fill="#44bc52" stroke="#34a444" stroke-width="1"/><path d="M1,15.3 l4.5,4.5 l4.5,-4.5" fill="none" stroke="#347a44" stroke-width="2"/></svg>
  <!-- Effects -->
  <div class="gb" style="left:289px;top:293px;width:257px;height:79px"></div>
  <div class="t gl" style="left:296px;top:288px">Effects</div>
  <div style="left:302px;top:306px;width:121px;height:21px;background:#fff;border:1px solid #999eac"></div>
  <div class="t" style="left:306px;top:310px;letter-spacing:-0.4px">Emboss</div>
  <svg style="left:405px;top:307px" width="17" height="19" viewBox="0 0 17 19"><defs><linearGradient id="ag1" x1="0" y1="0" x2="0.4" y2="1"><stop offset="0" stop-color="#f4f7fe"/><stop offset="0.5" stop-color="#d2e0f6"/><stop offset="1" stop-color="#a8c4ea"/></linearGradient></defs><rect x="0.5" y="0.5" width="16" height="18" rx="1.5" fill="url(#ag1)" stroke="#c4cce0"/><path d="M4.2,7.6 l4.3,4.3 l4.3,-4.3" fill="none" stroke="#3c4c68" stroke-width="2.2"/></svg>
  <div style="left:302px;top:333px;width:121px;height:21px;background:#fff;border:1px solid #999eac"></div>
  <div class="t" style="left:306px;top:337px;letter-spacing:-0.15px">RainBow</div>
  <svg style="left:405px;top:334px" width="17" height="19" viewBox="0 0 17 19"><defs><linearGradient id="ag2" x1="0" y1="0" x2="0.4" y2="1"><stop offset="0" stop-color="#f4f7fe"/><stop offset="0.5" stop-color="#d2e0f6"/><stop offset="1" stop-color="#a8c4ea"/></linearGradient></defs><rect x="0.5" y="0.5" width="16" height="18" rx="1.5" fill="url(#ag2)" stroke="#c4cce0"/><path d="M4.2,7.6 l4.3,4.3 l4.3,-4.3" fill="none" stroke="#3c4c68" stroke-width="2.2"/></svg>
  <div class="trk" style="left:437px;top:315.7px;width:88px"></div><svg class="thumb" style="left:487px;top:308px" width="11" height="21" viewBox="0 0 11 21"><defs><linearGradient id="tg18" x1="0" x2="1"><stop offset="0" stop-color="#fafafc"/><stop offset="0.5" stop-color="#e2e2ea"/><stop offset="1" stop-color="#bcbcc6"/></linearGradient></defs><path d="M1.5,0.5 h8 a1,1 0 0 1 1,1 v13.5 l-5,5 l-5,-5 v-13.5 a1,1 0 0 1 1,-1z" fill="url(#tg18)" stroke="#98a2aa" stroke-width="1"/><path d="M1.5,0.5 h8 a1,1 0 0 1 1,1 v2.4 h-10 v-2.4 a1,1 0 0 1 1,-1z" fill="#44bc52" stroke="#34a444" stroke-width="1"/><path d="M1,15.3 l4.5,4.5 l4.5,-4.5" fill="none" stroke="#347a44" stroke-width="2"/></svg>
  <div class="btn" style="left:555px;top:350px;width:79px;height:21px;line-height:19.5px">OK</div>
</div>
</body>
</html>
